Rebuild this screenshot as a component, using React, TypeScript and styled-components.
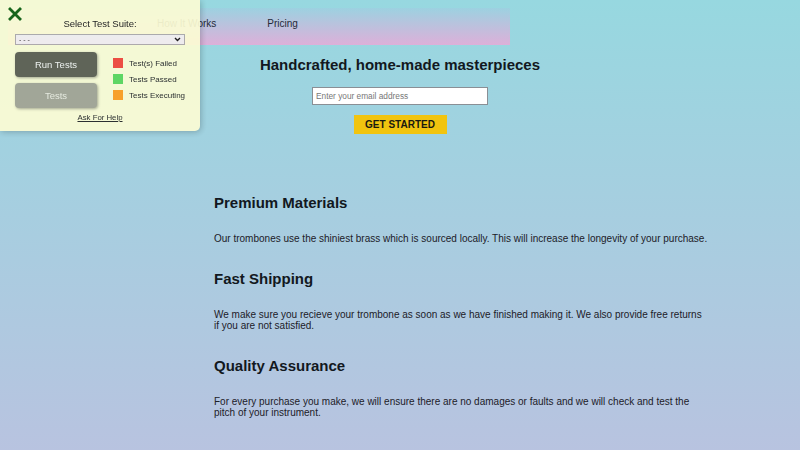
import React from "react";
import styled, { createGlobalStyle } from "styled-components";

const Global = createGlobalStyle`
  html { min-height: 100%; background: linear-gradient(180deg, #97d8e0 0%, #b8c3e0 100%); }
  body {
    margin: 8px;
    font-family: "Liberation Sans", Arial, sans-serif;
    color: #15161c;
  }
`;

const Page = styled.div`
  display: flex;
  flex-direction: column;
`;

const Header = styled.header`
  width: 502px;
  height: 37px;
  background: linear-gradient(180deg, rgba(160, 205, 225, 0.6) 0%, #ddb0d9 100%);
  display: flex;
  align-items: flex-start;
  padding: 10px 0 0 149px;
  box-sizing: border-box;
  gap: 51px;
`;

const NavLink = styled.a`
  font-size: 10px;
  line-height: 12px;
  color: #262a38;
  text-decoration: none;
`;

const Hero = styled.section`
  display: flex;
  flex-direction: column;
  align-items: center;
`;

const Title = styled.h1`
  font-size: 15px;
  line-height: 17px;
  font-weight: bold;
  margin: 11px 0 14px;
  color: #121820;
`;

const Email = styled.input`
  width: 176px;
  height: 18px;
  box-sizing: border-box;
  border: 1px solid #8a8f95;
  font-size: 8.3px;
  padding: 0 3px;
  font-family: "Liberation Sans", Arial, sans-serif;
  &::placeholder { color: #777; }
`;

const Cta = styled.button`
  margin-top: 10px;
  width: 93px;
  height: 19px;
  border: none;
  background: #f1c40f;
  font-family: "Liberation Sans", Arial, sans-serif;
  font-weight: bold;
  font-size: 10px;
  color: #1a1a10;
  padding: 0;
`;

const Features = styled.main`
  margin-top: 60px;
  padding-left: 206px;
  width: 494px;
`;

const FeatureTitle = styled.h2`
  font-size: 15px;
  line-height: 17px;
  font-weight: bold;
  margin: 0 0 22px;
  color: #121820;
`;

const FeatureText = styled.p`
  font-size: 10px;
  margin: 0 0 25px;
  line-height: 11.6px;
  color: #1c2028;
`;

const Panel = styled.div`
  position: fixed;
  top: 0;
  left: 0;
  width: 200px;
  height: 131px;
  background: #fcfcd4;
  opacity: 0.92;
  border-bottom-right-radius: 5px;
  box-shadow: 1px 1px 6px rgba(0, 0, 0, 0.25);
  font-family: "Liberation Sans", Arial, sans-serif;
  display: flex;
  flex-direction: column;
  align-items: center;
  padding: 17px 15px 0;
  box-sizing: border-box;
`;

const Close = styled.svg`
  position: absolute;
  left: 8px;
  top: 7px;
`;

const SuiteLabel = styled.div`
  font-size: 9.5px;
  color: #111;
  line-height: 13px;
`;

const Select = styled.div`
  margin-top: 4px;
  width: 170px;
  height: 11px;
  box-sizing: border-box;
  border: 1px solid #a9a9a9;
  background: #f0f0f0;
  display: flex;
  align-items: center;
  justify-content: space-between;
  padding: 0 3px;
  font-size: 7px;
  color: #333;
`;

const Controls = styled.div`
  margin-top: 7px;
  width: 170px;
  display: flex;
  gap: 16px;
`;

const Buttons = styled.div`
  display: flex;
  flex-direction: column;
  gap: 6px;
`;

const TestButton = styled.button<{ $dark?: boolean }>`
  width: 82px;
  height: 25px;
  border: none;
  border-radius: 4px;
  background: ${(p) => (p.$dark ? "#5b5b4d" : "#a2a292")};
  color: ${(p) => (p.$dark ? "#f4f4f0" : "#ececdf")};
  font-family: "Liberation Sans", Arial, sans-serif;
  font-size: 9.5px;
  box-shadow: 1px 1px 3px rgba(0, 0, 0, 0.35);
  padding: 0;
`;

const Legend = styled.div`
  display: flex;
  flex-direction: column;
  gap: 6px;
  padding-top: 6px;
`;

const LegendItem = styled.div`
  display: flex;
  align-items: center;
  gap: 6px;
  font-size: 8px;
  color: #222;
  height: 10px;
  white-space: nowrap;
`;

const Swatch = styled.span<{ $color: string }>`
  width: 10px;
  height: 10px;
  background: ${(p) => p.$color};
`;

const Help = styled.a`
  margin-top: 5px;
  font-size: 7.8px;
  color: #222;
  text-decoration: underline;
`;

export default function App() {
  return (
    <>
      <Global />
      <Page>
        <Header>
          <NavLink>How It Works</NavLink>
          <NavLink>Pricing</NavLink>
        </Header>
        <Hero>
          <Title>Handcrafted, home-made masterpieces</Title>
          <Email placeholder="Enter your email address" />
          <Cta>GET STARTED</Cta>
        </Hero>
        <Features>
          <FeatureTitle>Premium Materials</FeatureTitle>
          <FeatureText>
            Our trombones use the shiniest brass which is sourced locally. This will increase the longevity of your purchase.
          </FeatureText>
          <FeatureTitle>Fast Shipping</FeatureTitle>
          <FeatureText>
            We make sure you recieve your trombone as soon as we have finished making it. We also provide free returns if you are not satisfied.
          </FeatureText>
          <FeatureTitle>Quality Assurance</FeatureTitle>
          <FeatureText>
            For every purchase you make, we will ensure there are no damages or faults and we will check and test the pitch of your instrument.
          </FeatureText>
        </Features>
      </Page>
      <Panel>
        <Close width="14" height="14" viewBox="0 0 14 14">
          <path d="M2 2 L12 12 M12 2 L2 12" stroke="#0b5d0b" strokeWidth="2.8" strokeLinecap="square" />
        </Close>
        <SuiteLabel>Select Test Suite:</SuiteLabel>
        <Select>
          <span>- - -</span>
          <svg width="7" height="5" viewBox="0 0 7 5">
            <path d="M1 1 L3.5 3.5 L6 1" stroke="#111" strokeWidth="1.4" fill="none" />
          </svg>
        </Select>
        <Controls>
          <Buttons>
            <TestButton $dark>Run Tests</TestButton>
            <TestButton>Tests</TestButton>
          </Buttons>
          <Legend>
            <LegendItem><Swatch $color="#f44336" />Test(s) Failed</LegendItem>
            <LegendItem><Swatch $color="#5ad65a" />Tests Passed</LegendItem>
            <LegendItem><Swatch $color="#ff9d1c" />Tests Executing</LegendItem>
          </Legend>
        </Controls>
        <Help>Ask For Help</Help>
      </Panel>
    </>
  );
}
